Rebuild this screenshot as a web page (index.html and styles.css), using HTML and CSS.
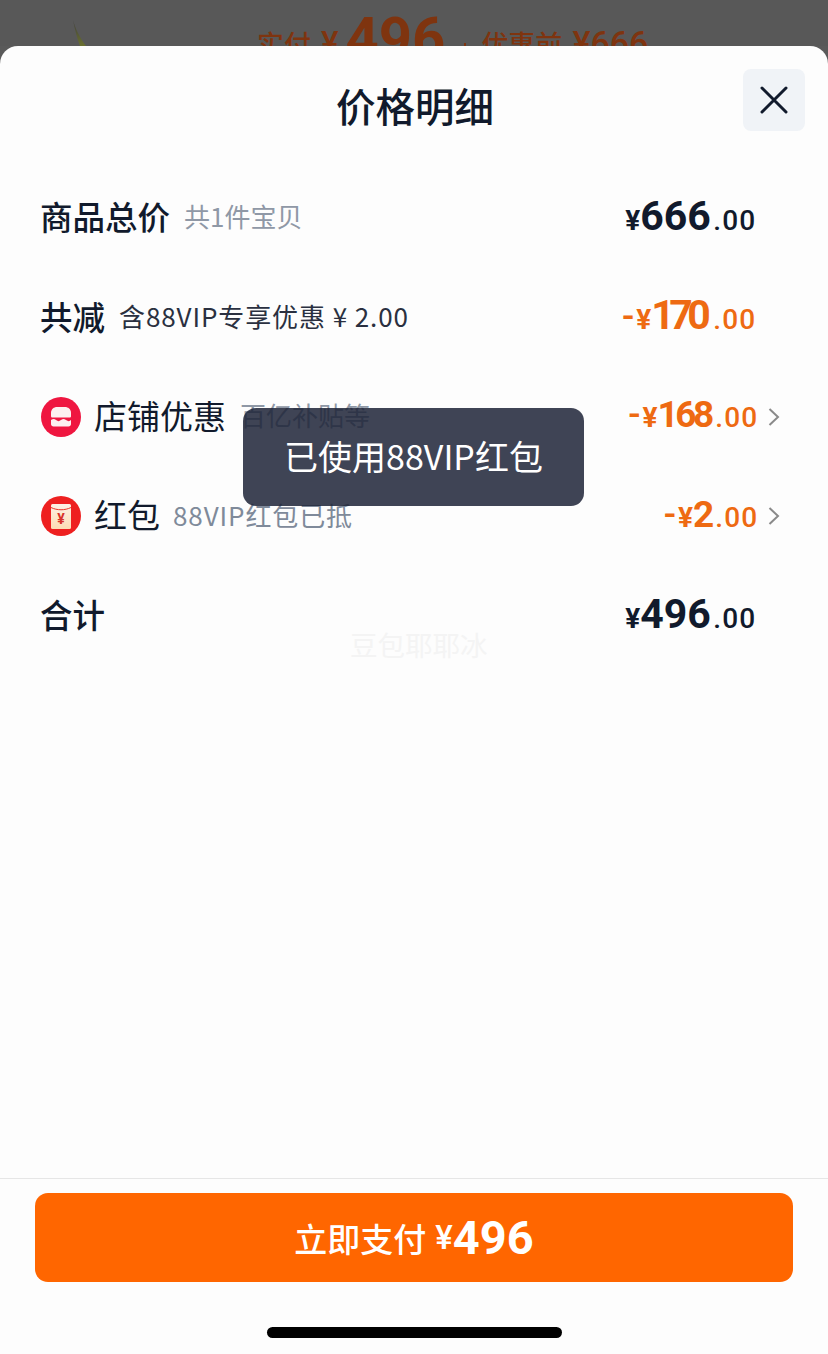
FILE: index.html
```html
<!DOCTYPE html>
<html lang="zh">
<head>
    <meta charset="UTF-8">
    <meta name="viewport" content="width=device-width, initial-scale=1.0">
    <title>价格明细</title>
    <link rel="stylesheet" href="styles.css">
</head>
<body>

<div class="backdrop">
    <svg class="leaf" width="20" height="26" viewBox="0 0 20 26">
        <defs>
            <linearGradient id="leaf-fill" x1="0" y1="0" x2="0" y2="1">
                <stop offset="0" stop-color="#3f3f3c"/>
                <stop offset="1" stop-color="#6a7030"/>
            </linearGradient>
        </defs>
        <path d="M1 0 C3 8 8 18 14 26 L8 26 C5 18 3 10 1 0Z" fill="url(#leaf-fill)"/>
    </svg>
    <div class="backdrop-text">实付<span class="backdrop-num backdrop-yen">¥</span><span class="backdrop-big">496</span><i class="backdrop-sep"></i>优惠前<span class="backdrop-num backdrop-was">¥666</span></div>
</div>

<div class="sheet">
    <div class="sheet-head">
        <h1 class="sheet-title">价格明细</h1>
        <button class="close-btn">
            <svg width="30" height="30" viewBox="0 0 30 30"><path d="M3 3 L27 27 M27 3 L3 27" stroke="#111a2c" stroke-width="3" stroke-linecap="round" fill="none"/></svg>
        </button>
    </div>

    <div class="rows">
        <div class="row">
            <span class="label-bold">商品总价</span>
            <span class="note">共1件宝贝</span>
            <span class="price"><span class="yen">¥</span><b>666</b><span class="cents">.00</span></span>
        </div>
        <div class="row">
            <span class="label-bold">共减</span>
            <span class="note note-dark">含88VIP专享优惠 ¥ 2.00</span>
            <span class="price orange"><span class="minus">-</span><span class="yen">¥</span><b class="tight">170</b><span class="cents">.00</span></span>
        </div>
        <div class="row row-link">
            <svg class="row-icon" width="40" height="40" viewBox="0 0 40 40">
                <circle cx="20" cy="20" r="20" fill="#ef1640"/>
                <path d="M10 19 L10 16 C10 12 13 10 16 10 L24 10 C27 10 30 12 30 16 L30 19 C30 20 29.500 20.500 28.500 20.500 L11.500 20.500 C10.500 20.500 10 20 10 19 Z" fill="#fdf0f0"/>
                <path d="M10 23 C12 21.500 13.500 21.500 15 23 C17 24.500 18 24.500 20 23 C22 21.500 23 21.500 25 23 C27 24.500 28.500 24.500 30 23 L30 27 C30 28.500 29 29.500 27.500 29.500 L12.500 29.500 C11 29.500 10 28.500 10 27 Z" fill="#fdf0f0"/>
            </svg>
            <span class="label">店铺优惠</span>
            <span class="note">百亿补贴等</span>
            <span class="price orange price-mid"><span class="minus">-</span><span class="yen">¥</span><b>168</b><span class="cents">.00</span></span>
            <svg class="chevron" width="12" height="20" viewBox="0 0 12 20"><path d="M1.500 2 L10 10 L1.500 18" stroke="#8a8a8a" stroke-width="2" fill="none"/></svg>
        </div>
        <div class="row row-link">
            <svg class="row-icon" width="40" height="40" viewBox="0 0 40 40">
                <defs>
                    <linearGradient id="packet-fill" x1="0" y1="0" x2="0" y2="1">
                        <stop offset="0" stop-color="#fdf1e6"/>
                        <stop offset="1" stop-color="#fddcb4"/>
                    </linearGradient>
                </defs>
                <circle cx="20" cy="20" r="20" fill="#ee2020"/>
                <rect x="10" y="8" width="20" height="25" rx="1.500" fill="url(#packet-fill)"/>
                <path d="M10 11.500 C16 14.500 24 14.500 30 11.500" stroke="#e8352a" stroke-width="1" fill="none"/>
                <text class="icon-yen" x="20" y="27.500" text-anchor="middle">¥</text>
            </svg>
            <span class="label">红包</span>
            <span class="note note-blue">88VIP红包已抵</span>
            <span class="price orange price-mid"><span class="minus">-</span><span class="yen">¥</span><b>2</b><span class="cents">.00</span></span>
            <svg class="chevron" width="12" height="20" viewBox="0 0 12 20"><path d="M1.500 2 L10 10 L1.500 18" stroke="#8a8a8a" stroke-width="2" fill="none"/></svg>
        </div>
        <div class="row">
            <span class="label-bold">合计</span>
            <span class="price"><span class="yen">¥</span><b>496</b><span class="cents">.00</span></span>
        </div>
    </div>

    <div class="watermark">豆包耶耶冰</div>
    <div class="toast">已使用88VIP红包</div>

    <div class="sheet-foot">
        <button class="pay-btn">立即支付 <span class="pay-yen">¥</span><b>496</b></button>
        <div class="home-bar"></div>
    </div>
</div>

</body>
</html>
```

FILE: styles.css
```css
* {
    box-sizing: border-box;
}

html, body {
    margin: 0;
    height: 100%;
    overflow: hidden;
}

body {
    font-family: "Noto Sans CJK SC", "Noto Sans", sans-serif;
    background-color: #5a5a5a;
    color: #111a2c;
    display: flex;
    flex-direction: column;
}

.backdrop {
    height: 46px;
    flex-shrink: 0;
    position: relative;
    overflow: hidden;
    background-color: #585858;
}

.leaf {
    position: absolute;
    left: 72px;
    top: 20px;
}

.backdrop-text {
    position: absolute;
    left: 257px;
    top: 3px;
    white-space: nowrap;
    font-size: 27px;
    line-height: 70px;
    font-weight: 500;
    color: #7f340f;
}

.backdrop-num {
    font-family: "Roboto", sans-serif;
    font-size: 33px;
}

.backdrop-yen {
    margin-left: 10px;
}

.backdrop-was {
    margin-left: 10px;
    font-size: 34px;
}

.backdrop-big {
    font-family: "Roboto", sans-serif;
    font-size: 58px;
    font-weight: 700;
    margin-left: 7px;
    vertical-align: -3px;
}

.backdrop-sep {
    display: inline-block;
    width: 2px;
    height: 20px;
    margin: 0 15px 0 19px;
    vertical-align: -8px;
    background-color: #7f340f;
}

.sheet {
    flex: 1;
    position: relative;
    display: flex;
    flex-direction: column;
    background-color: #fdfdfd;
    border-radius: 18px 18px 0 0;
}

.sheet-head {
    height: 122px;
    display: flex;
    justify-content: center;
}

.sheet-title {
    margin: 0 0 0 2px;
    font-size: 39.500px;
    line-height: 118px;
    font-weight: 500;
}

.close-btn {
    position: absolute;
    top: 23px;
    right: 23px;
    width: 62px;
    height: 62px;
    padding: 0;
    border: none;
    border-radius: 8px;
    background-color: #f0f3f7;
    display: flex;
    align-items: center;
    justify-content: center;
}

.rows {
    display: flex;
    flex-direction: column;
    padding: 0 73px 0 41px;
}

.row {
    height: 99.500px;
    display: flex;
    align-items: center;
    white-space: nowrap;
}

.row-link {
    margin-right: -25px;
}

.row > span {
    margin-bottom: 4px;
}

.label-bold {
    font-size: 32.500px;
    font-weight: 500;
    margin-left: -1px;
}

.label {
    font-size: 33px;
    margin-left: 13px;
}

.note {
    font-size: 26px;
    color: #8f98a6;
    margin-left: 14px;
}

.note-dark {
    color: #2a3040;
    letter-spacing: 0.900px;
}

.note-blue {
    color: #7f8a9a;
    letter-spacing: 0.900px;
    margin-left: 13px;
}

.row-icon {
    flex-shrink: 0;
}

.icon-yen {
    font-family: "Roboto", sans-serif;
    font-size: 14px;
    font-weight: 700;
    fill: #d8322a;
}

.row > .price {
    margin-left: auto;
    margin-bottom: 4px;
    font-family: "Roboto", sans-serif;
    font-weight: 500;
    color: #111a2c;
}

.row > .price.orange {
    color: #ee6a12;
}

.minus {
    font-size: 36px;
    font-weight: 500;
    margin-right: 2px;
    line-height: 1;
}

.yen {
    font-size: 28px;
    font-weight: 700;
}

.cents {
    font-size: 28px;
    letter-spacing: 1.200px;
    margin: 0 -1.500px 0 2.500px;
}

.price b {
    font-size: 41px;
    font-weight: 700;
}

.price b.tight {
    letter-spacing: -5.500px;
    margin-right: 5.500px;
}

.price-mid b {
    font-size: 37px;
    letter-spacing: -3.500px;
    margin-right: 3.500px;
}

.price-mid .cents {
    margin-left: 1px;
}

.chevron {
    margin-left: 11px;
}

.watermark {
    position: absolute;
    left: 350px;
    top: 578px;
    font-size: 27.500px;
    color: #f4f4f4;
}

.toast {
    position: absolute;
    left: 243px;
    top: 362px;
    width: 341px;
    height: 98px;
    padding-bottom: 4px;
    display: flex;
    align-items: center;
    justify-content: center;
    border-radius: 13px;
    background-color: rgba(29, 35, 55, 0.85);
    color: #fff;
    font-size: 34px;
}

.sheet-foot {
    margin-top: auto;
    height: 176px;
    border-top: 1px solid #e6e6e6;
    padding: 14px 35px 0;
    display: flex;
    flex-direction: column;
    align-items: center;
}

.pay-btn {
    width: 100%;
    height: 89px;
    border: none;
    border-radius: 13px;
    background-color: #ff6600;
    color: #fff;
    font-family: inherit;
    font-size: 33px;
    font-weight: 500;
    display: flex;
    align-items: center;
    justify-content: center;
}

.pay-yen {
    margin-left: 9px;
    font-family: "Roboto", sans-serif;
}

.pay-btn b {
    font-family: "Roboto", sans-serif;
    font-size: 47px;
    font-weight: 700;
}

.home-bar {
    margin-top: 45px;
    width: 295px;
    height: 11px;
    border-radius: 6px;
    background-color: #000;
}
```
